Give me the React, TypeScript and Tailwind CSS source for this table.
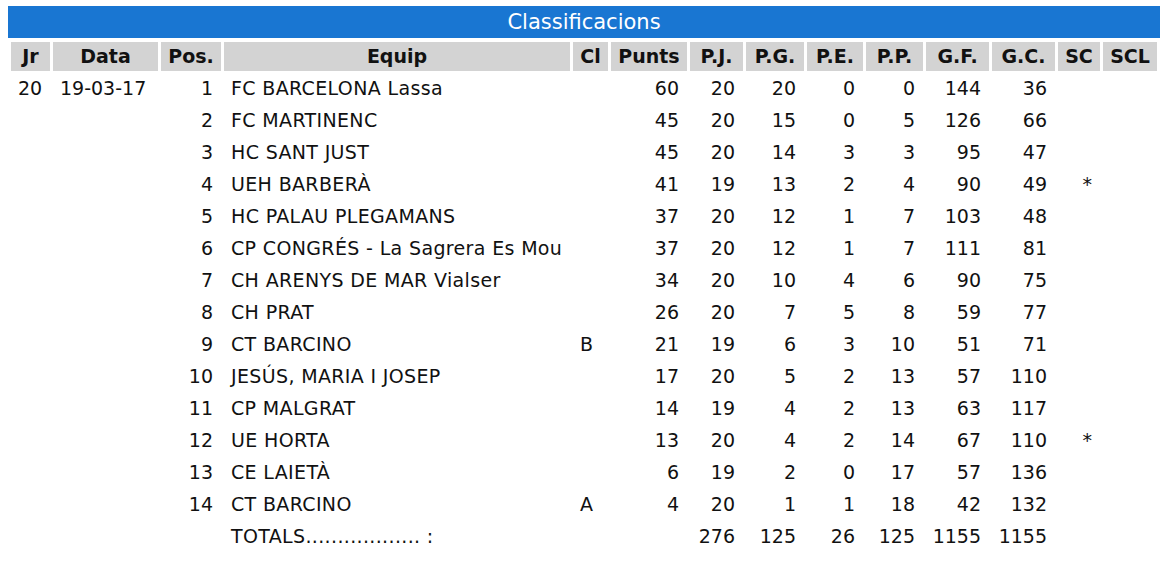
type Row = {
  pos: number
  team: string
  cl: string
  pts: number
  pj: number
  pg: number
  pe: number
  pp: number
  gf: number
  gc: number
  sc: string
}

const rows: Row[] = [
  { pos: 1, team: 'FC BARCELONA Lassa', cl: '', pts: 60, pj: 20, pg: 20, pe: 0, pp: 0, gf: 144, gc: 36, sc: '' },
  { pos: 2, team: 'FC MARTINENC', cl: '', pts: 45, pj: 20, pg: 15, pe: 0, pp: 5, gf: 126, gc: 66, sc: '' },
  { pos: 3, team: 'HC SANT JUST', cl: '', pts: 45, pj: 20, pg: 14, pe: 3, pp: 3, gf: 95, gc: 47, sc: '' },
  { pos: 4, team: 'UEH BARBERÀ', cl: '', pts: 41, pj: 19, pg: 13, pe: 2, pp: 4, gf: 90, gc: 49, sc: '*' },
  { pos: 5, team: 'HC PALAU PLEGAMANS', cl: '', pts: 37, pj: 20, pg: 12, pe: 1, pp: 7, gf: 103, gc: 48, sc: '' },
  { pos: 6, team: 'CP CONGRÉS - La Sagrera Es Mou', cl: '', pts: 37, pj: 20, pg: 12, pe: 1, pp: 7, gf: 111, gc: 81, sc: '' },
  { pos: 7, team: 'CH ARENYS DE MAR Vialser', cl: '', pts: 34, pj: 20, pg: 10, pe: 4, pp: 6, gf: 90, gc: 75, sc: '' },
  { pos: 8, team: 'CH PRAT', cl: '', pts: 26, pj: 20, pg: 7, pe: 5, pp: 8, gf: 59, gc: 77, sc: '' },
  { pos: 9, team: 'CT BARCINO', cl: 'B', pts: 21, pj: 19, pg: 6, pe: 3, pp: 10, gf: 51, gc: 71, sc: '' },
  { pos: 10, team: 'JESÚS, MARIA I JOSEP', cl: '', pts: 17, pj: 20, pg: 5, pe: 2, pp: 13, gf: 57, gc: 110, sc: '' },
  { pos: 11, team: 'CP MALGRAT', cl: '', pts: 14, pj: 19, pg: 4, pe: 2, pp: 13, gf: 63, gc: 117, sc: '' },
  { pos: 12, team: 'UE HORTA', cl: '', pts: 13, pj: 20, pg: 4, pe: 2, pp: 14, gf: 67, gc: 110, sc: '*' },
  { pos: 13, team: 'CE LAIETÀ', cl: '', pts: 6, pj: 19, pg: 2, pe: 0, pp: 17, gf: 57, gc: 136, sc: '' },
  { pos: 14, team: 'CT BARCINO', cl: 'A', pts: 4, pj: 20, pg: 1, pe: 1, pp: 18, gf: 42, gc: 132, sc: '' },
]

const th = 'h-[29px] p-0 bg-[#d3d3d3] font-bold text-center'
const tdL = 'h-[29px] p-0 pl-[7px] text-left'
const tdR = 'h-[29px] p-0 pr-[8px] text-right'
const team = 'tracking-[0.35px] whitespace-nowrap'

export default function App() {
  return (
    <div className="min-h-screen bg-white pl-2 pt-[6px] font-['DejaVu_Sans',Verdana,sans-serif] text-[19px] text-[#111]">
      <div className="w-[1152px]">
        <div className="h-[32px] bg-[#1976d2] text-center text-[21px] leading-[32px] text-white">
          Classificacions
        </div>
        <table className="w-full table-fixed border-separate border-spacing-[3px] mt-[1px] leading-none">
          <thead>
            <tr>
              <th className={`${th} w-[39px]`}>Jr</th>
              <th className={`${th} w-[105px]`}>Data</th>
              <th className={`${th} w-[60px]`}>Pos.</th>
              <th className={`${th} w-[346px]`}>Equip</th>
              <th className={`${th} w-[35px]`}>Cl</th>
              <th className={`${th} w-[76px]`}>Punts</th>
              <th className={`${th} w-[53px]`}>P.J.</th>
              <th className={`${th} w-[58px]`}>P.G.</th>
              <th className={`${th} w-[56px]`}>P.E.</th>
              <th className={`${th} w-[57px]`}>P.P.</th>
              <th className={`${th} w-[63px]`}>G.F.</th>
              <th className={`${th} w-[63px]`}>G.C.</th>
              <th className={`${th} w-[42px]`}>SC</th>
              <th className={`${th} w-[54px]`}>SCL</th>
            </tr>
          </thead>
          <tbody>
            {rows.map((r, i) => (
              <tr key={r.pos}>
                <td className={tdL}>{i === 0 ? '20' : ''}</td>
                <td className={`${tdL} pl-[5px]`}>{i === 0 ? '19-03-17' : ''}</td>
                <td className={tdR}>{r.pos}</td>
                <td className={`${tdL} ${team}`}>{r.team}</td>
                <td className={tdL}>{r.cl}</td>
                <td className={tdR}>{r.pts}</td>
                <td className={tdR}>{r.pj}</td>
                <td className={tdR}>{r.pg}</td>
                <td className={tdR}>{r.pe}</td>
                <td className={tdR}>{r.pp}</td>
                <td className={tdR}>{r.gf}</td>
                <td className={tdR}>{r.gc}</td>
                <td className={tdR}>{r.sc}</td>
                <td className={tdR}></td>
              </tr>
            ))}
            <tr>
              <td className={tdL}></td>
              <td className={tdL}></td>
              <td className={tdR}></td>
              <td className={`${tdL} ${team}`}>TOTALS.................. :</td>
              <td className={tdL}></td>
              <td className={tdR}></td>
              <td className={tdR}>276</td>
              <td className={tdR}>125</td>
              <td className={tdR}>26</td>
              <td className={tdR}>125</td>
              <td className={tdR}>1155</td>
              <td className={tdR}>1155</td>
              <td className={tdR}></td>
              <td className={tdR}></td>
            </tr>
          </tbody>
        </table>
      </div>
    </div>
  )
}
